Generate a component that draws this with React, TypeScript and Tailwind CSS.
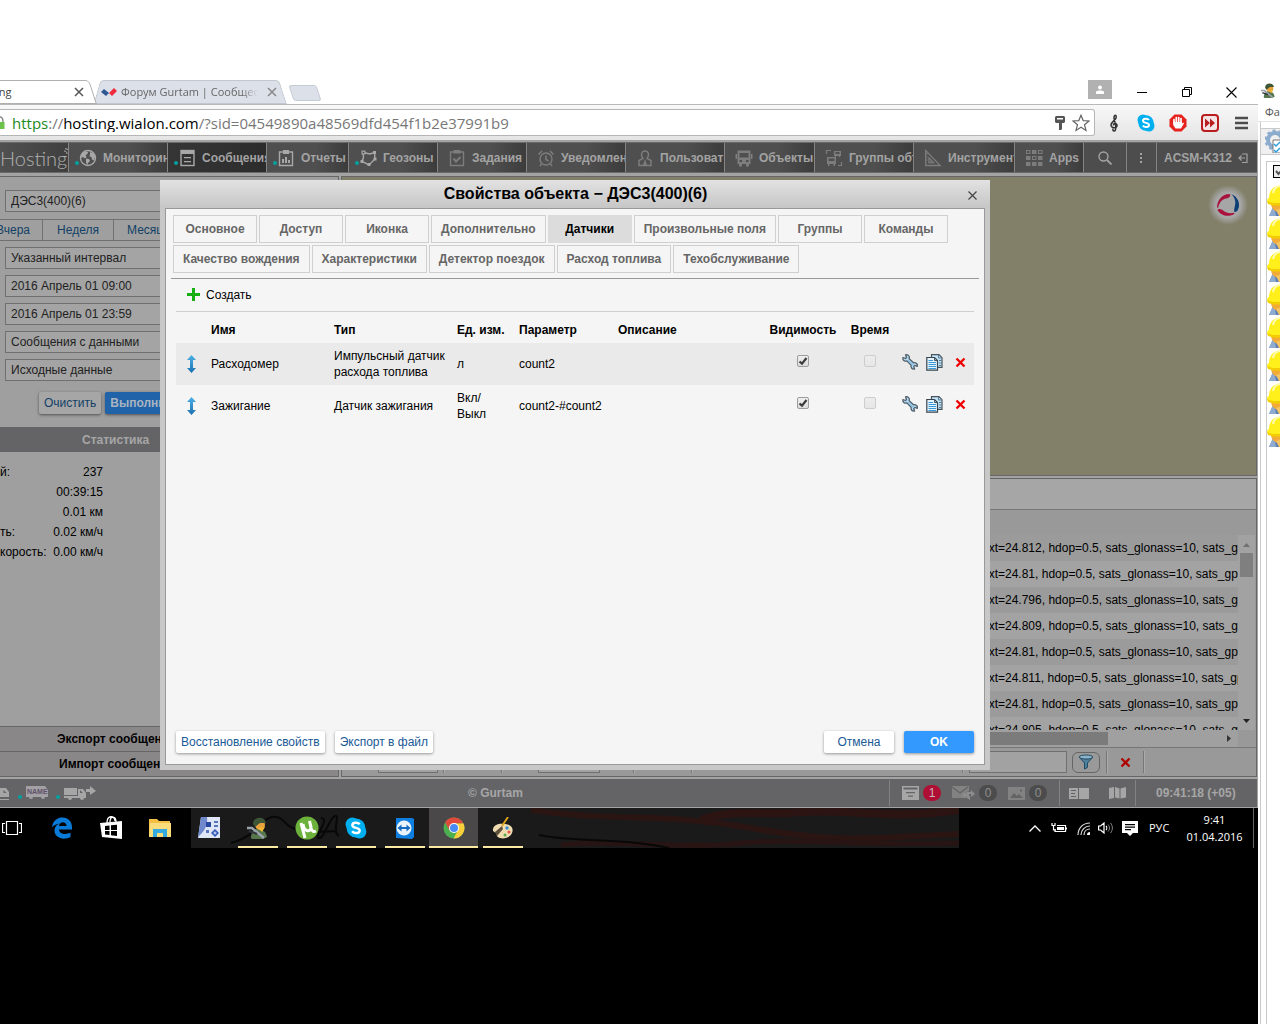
import React, { useState } from 'react';

interface NavItem {
  label: string;
  icon: React.ReactNode;
  width: string;
  dot?: boolean;
  dim?: boolean;
  active?: boolean;
}

interface Sensor {
  name: string;
  type: string;
  unit: string;
  param: string;
  visible: boolean;
}

interface TaskItem {
  name: string;
  icon: React.ReactNode;
  running?: boolean;
  active?: boolean;
}

const TABS = [
  'Основное', 'Доступ', 'Иконка', 'Дополнительно', 'Датчики', 'Произвольные поля', 'Группы', 'Команды',
  'Качество вождения', 'Характеристики', 'Детектор поездок', 'Расход топлива', 'Техобслуживание',
];

const SENSORS: Sensor[] = [
  { name: 'Расходомер', type: 'Импульсный датчик расхода топлива', unit: 'л', param: 'count2', visible: true },
  { name: 'Зажигание', type: 'Датчик зажигания', unit: 'Вкл/\nВыкл', param: 'count2-#count2', visible: true },
];

const VOLTAGES = ['24.812', '24.81', '24.796', '24.809', '24.81', '24.811', '24.81', '24.805'];

const STATS = [
  ['й:', '237'],
  ['', '00:39:15'],
  ['', '0.01 км'],
  ['ть:', '0.02 км/ч'],
  ['корость:', '0.00 км/ч'],
];

/* ---------- icons ---------- */

const Glyph: React.FC<{ children: React.ReactNode; className?: string; box?: string }> = ({ children, className = 'size-[18px]', box = '0 0 18 18' }) => (
  <svg viewBox={box} className={`shrink-0 ${className}`} fill="none" aria-hidden="true">{children}</svg>
);

const GlobeIcon = () => (
  <Glyph>
    <circle cx="9" cy="9" r="7.5" stroke="currentColor" strokeWidth="1.4" />
    <path d="M3 4.5 6 2.5l3 .5-.5 2-2 1 1 2-1.5 1.5L4 8 2 9zM7 9.5l3 .5 1 2-2 2-.5 2-1.5-2.500zM11 3l3.500 1.500 1.500 3-1 4-2-1-.5-2.500-2-.5.5-2z" fill="currentColor" />
  </Glyph>
);
const MessagesIcon = () => (
  <Glyph>
    <rect x="3" y="1.500" width="13" height="15" stroke="currentColor" strokeWidth="1.400" />
    <path d="M3 2h13v3H3zM6 8h7v1.300H6zM6 12h7v1.300H6z" fill="currentColor" />
  </Glyph>
);
const ReportsIcon = () => (
  <Glyph>
    <path d="M6 3H2.500v13.500h13V3H12" stroke="currentColor" strokeWidth="1.400" />
    <path d="M6 1h6v4H6zM5 10h2v4H5zM8 8h2v6H8zM11 11h2v3h-2z" fill="currentColor" />
  </Glyph>
);
const GeoIcon = () => (
  <Glyph>
    <path d="M4 3.500 11 5l4.500-1.500L16 10l-6 6-7-3.500 1.500-4z" stroke="currentColor" strokeWidth="1.400" />
    <path d="M2.500 1.500h4v4h-4zM14 2h3v3h-3zM14.500 8.500h3v3h-3zM8.500 14h3v3h-3zM1.500 11h3v3h-3z" fill="currentColor" />
    <rect x="3.700" y="2.700" width="1.600" height="1.600" fill="#4a4a4a" />
  </Glyph>
);
const TasksIcon = () => (
  <Glyph>
    <path d="M6 3H2.500v13.500h13V3H12" stroke="currentColor" strokeWidth="1.400" />
    <path d="M5.500 1h7v3.500h-7z" fill="currentColor" />
    <path d="m5.500 9.500 2.500 3 4.500-4.500" stroke="currentColor" strokeWidth="2" />
  </Glyph>
);
const AlarmIcon = () => (
  <Glyph>
    <circle cx="9" cy="10" r="6" stroke="currentColor" strokeWidth="1.400" />
    <path d="M9 6.500v4l2.500 1.500M4.500 15 3 17M13.500 15l1.500 2M1.500 5.500 5 2M16.500 5.500 13 2" stroke="currentColor" strokeWidth="1.500" />
  </Glyph>
);
const UserIcon = () => (
  <Glyph>
    <path d="M5.500 5.500a3.500 3.500 0 0 1 7 0c0 2-1 3-1.500 4l4 2v5H3v-5l4-2c-.5-1-1.500-2-1.500-4z" stroke="currentColor" strokeWidth="1.500" />
    <path d="m9 10 2 6H7z" fill="currentColor" />
  </Glyph>
);
const BusIcon = () => (
  <Glyph>
    <path fillRule="evenodd" d="M2.500 1.500h13V15H14v2.500h-3V15H7v2.500H4V15H2.500zM4.500 4v4.500h9V4zM4.500 11v2H7v-2zM11 11v2h2.500v-2zM.5 5H2v5H.5zM16 5h1.500v5H16z" fill="currentColor" />
  </Glyph>
);
const GroupsIcon = () => (
  <Glyph>
    <path fillRule="evenodd" d="M2 8h9v7h-1v2H8.500v-2h-4v2H3v-2H2zM3.500 9.500v2.500h6V9.500zM9 2h7v5h-1v1h-1V7h-3v1h-1V7H9zM10.500 3v2h4V3z" fill="currentColor" />
    <path d="M1.500 5V1.500H6M16.500 13v3.500H13" stroke="currentColor" strokeWidth="1.200" />
  </Glyph>
);
const ToolsIcon = () => (
  <Glyph>
    <path d="M1.700 1.500v15h14.500zM5 9v4.500h4.500z" stroke="currentColor" strokeWidth="1.300" />
    <path d="M2 5h1.500M2 8h1.500M2 11h1.500" stroke="currentColor" />
  </Glyph>
);
const AppsIcon = () => (
  <Glyph>
    {[1, 7, 13].map((y) => [1, 7, 13].map((x) => (
      <rect key={`${x}-${y}`} x={x + 0.5} y={y + 0.5} width="3.500" height="3" stroke="currentColor" fill={(x + y) % 4 === 0 || y === 13 ? 'currentColor' : 'none'} />
    )))}
  </Glyph>
);
const WrenchIcon = () => (
  <Glyph className="size-4" box="0 0 16 16">
    <path d="M3.500.8 4.500 3.500 3.500 4.500 1 3.500c-.6 2.500 1.500 4.200 4 3.500l4.200 4.200c-.7 2.500 1 4.300 3.400 3.800l-.9-2.400 1.200-1.200 2.400.9c.6-2.400-1.300-4.100-3.800-3.500L7.200 4.700C7.900 2.200 6 .3 3.500.8z" fill="#b4d9f0" stroke="#52626d" strokeWidth="1.300" strokeLinejoin="round" />
    <path d="m6 6 5.500 5.500" stroke="#8cc3e8" strokeWidth="1.500" />
  </Glyph>
);
const CopyIcon = () => (
  <Glyph className="size-[17px]" box="0 0 17 17">
    <path d="M5.500.7h7.500l3 3v9.600H5.500z" fill="#c3e4f7" stroke="#48545e" strokeWidth="1.200" />
    <path d="M12.500 1v3h3M13 6.500h2.500M13 9h2.500M13 11.500h2.500" stroke="#5a7d96" />
    <path d="M.8 3.500h7.700l3 3v9.700H.8z" fill="#e3f4fd" stroke="#37434c" strokeWidth="1.200" />
    <path d="M8.500 3.500v3h3" stroke="#48545e" />
    <path d="M2.500 6.500h4.500M2.500 8.500h7.500M2.500 10.500h7.500M2.500 12.500h7.500M2.500 14.500h7.500" stroke="#3b98d6" strokeWidth="1.200" />
  </Glyph>
);
const RedCross = ({ color = '#f00000' }) => (
  <Glyph className="size-[11px]" box="0 0 11 11">
    <path d="m1.500 1.500 8 8M9.500 1.500l-8 8" stroke={color} strokeWidth="2.300" />
  </Glyph>
);
const MoveIcon = () => (
  <Glyph className="h-[18px] w-[9px]" box="0 0 9 18">
    <defs>
      <linearGradient id="move" x1="0" y1="0" x2="0" y2="1">
        <stop offset="0" stopColor="#4fb0e6" />
        <stop offset="1" stopColor="#1970b0" />
      </linearGradient>
    </defs>
    <path d="M4.500 0 9 5H6v8h3l-4.500 5L0 13h3V5H0z" fill="url(#move)" />
  </Glyph>
);
const SkypeIcon = ({ className = 'size-[18px]' }) => (
  <svg viewBox="0 0 18 18" className={className} aria-hidden="true">
    <circle cx="6" cy="6" r="5.500" fill="#00aff0" />
    <circle cx="12" cy="12" r="5.500" fill="#00aff0" />
    <circle cx="9" cy="9" r="7.700" fill="#00aff0" />
    <path d="M12 6C10.500 4 6 4.200 6 6.700c0 2.800 6 1.600 6 4.300 0 2.600-4.600 2.600-6.200.6" stroke="#fff" strokeWidth="2" fill="none" />
  </svg>
);
const SoldierIcon = ({ className = 'size-[22px]' }) => (
  <svg viewBox="0 0 22 22" className={className} aria-hidden="true">
    <path d="M4 21c0-6 3-9 7-9 5 0 8 3 9 8l-4 2H5z" fill="#56764c" />
    <ellipse cx="13" cy="8" rx="5" ry="5" fill="#e8a23c" />
    <path d="M6 7c0-8 12-8 13-1L13 6 8 10z" fill="#3e5638" />
    <path d="m11 11 7-1-3 5z" fill="#f4b731" />
    <path d="M0 11h5l12 10" stroke="#9aa2ab" strokeWidth="2.500" fill="none" />
    <path d="m2 14 8 3" stroke="#30353a" strokeWidth="2" />
  </svg>
);
const WorkerIcon = () => (
  <svg viewBox="0 0 24 33" className="h-[33px] w-6 shrink-0" aria-hidden="true">
    <path d="m2 32 5-11h9l6 11z" fill="#5f7fb4" />
    <path d="M2 32 7 21l2 11z" fill="#8facd0" />
    <ellipse cx="13" cy="20" rx="9" ry="8" fill="#f2ab37" />
    <path d="m9 26 3 6h5V23z" fill="#f7c462" />
    <path d="M2 14C2-2 22-2 24 12l-1 7H2c-3-1-2-5 0-5z" fill="#fff01c" />
    <path d="M0 17c6 3 15 3 24 0v3c-9 2-18 2-23 0z" fill="#f3cf00" />
    <path d="M6 9c1-5 4-7 8-7" stroke="#fffbb0" strokeWidth="2" fill="none" />
  </svg>
);
const ChromeIcon = () => (
  <svg viewBox="0 0 22 22" className="size-[22px]" aria-hidden="true">
    <circle cx="11" cy="11" r="10.500" fill="#4caf50" />
    <path d="M11 11 2 5.500A10.500 10.500 0 0 1 20.500 6.500H11z" fill="#e0493c" />
    <path d="M11 6.500h9.500A10.500 10.500 0 0 1 10.500 21.500L15 13z" fill="#fbcf3c" />
    <path d="m2 5.500 5 8.500 4-3z" fill="#e0493c" />
    <circle cx="11" cy="11" r="5" fill="#fff" />
    <circle cx="11" cy="11" r="4" fill="#4a8af4" />
  </svg>
);

const NAV: NavItem[] = [
  { label: 'Мониторинг', icon: <GlobeIcon />, width: 'w-[99px]', dot: true },
  { label: 'Сообщения', icon: <MessagesIcon />, width: 'w-[99px]', dot: true, active: true },
  { label: 'Отчеты', icon: <ReportsIcon />, width: 'w-[82px]', dot: true },
  { label: 'Геозоны', icon: <GeoIcon />, width: 'w-[89px]', dot: true },
  { label: 'Задания', icon: <TasksIcon />, width: 'w-[89px]', dim: true },
  { label: 'Уведомления', icon: <AlarmIcon />, width: 'w-[99px]', dim: true },
  { label: 'Пользователи', icon: <UserIcon />, width: 'w-[99px]', dim: true },
  { label: 'Объекты', icon: <BusIcon />, width: 'w-[90px]', dim: true },
  { label: 'Группы объектов', icon: <GroupsIcon />, width: 'w-[99px]', dim: true },
  { label: 'Инструменты', icon: <ToolsIcon />, width: 'w-[101px]', dim: true },
  { label: 'Apps', icon: <AppsIcon />, width: 'w-[69px]', dim: true },
];

/* ---------- browser window ---------- */

const BrowserTabs = () => (
  <div className="flex h-[25px] shrink-0 items-stretch overflow-hidden border-b border-[#b9b9b9] bg-white font-['Open_Sans','Noto_Sans',sans-serif] text-[11px] text-[#444]">
    <div className="relative z-10 flex w-[93px] items-center justify-between pr-2 before:absolute before:inset-y-0 before:right-0 before:-left-4 before:skew-x-[18deg] before:rounded-tr before:border before:border-[#b0b0b0] before:bg-white">
      <span className="relative -ml-1">ing</span>
      <button aria-label="Закрыть вкладку" className="relative">
        <Glyph className="size-3" box="0 0 12 12"><path d="m2 2 8 8M10 2l-8 8" stroke="#555" strokeWidth="1.500" /></Glyph>
      </button>
    </div>
    <div className="relative flex w-[194px] items-center gap-1 pl-2 before:absolute before:inset-y-0 before:right-20 before:left-1 before:-skew-x-[16deg] before:rounded-tl before:border before:border-r-0 before:border-[#c3c8d0] before:bg-[#dce0e8] after:absolute after:inset-y-0 after:right-1 after:left-20 after:skew-x-[18deg] after:rounded-tr after:border after:border-l-0 after:border-[#c3c8d0] after:bg-[#dce0e8]">
      <svg viewBox="0 0 16 10" className="relative z-10 h-[10px] w-4" aria-hidden="true">
        <path d="m0 5 3-3 5 4-3 3z" fill="#2f5795" />
        <path d="m8 6 5-5 3 3-5 5z" fill="#f02b3d" />
      </svg>
      <span className="relative z-10 w-[137px] overflow-hidden whitespace-nowrap text-[#666] [mask-image:linear-gradient(to_right,black_88%,transparent)]">Форум Gurtam | Сообщество</span>
      <button aria-label="Закрыть вкладку" className="relative z-10 ml-1">
        <Glyph className="size-3" box="0 0 12 12"><path d="m2 2 8 8M10 2l-8 8" stroke="#888" strokeWidth="1.500" /></Glyph>
      </button>
    </div>
    <button aria-label="Новая вкладка" className="mt-[5px] ml-1 h-4 w-7 skew-x-[18deg] rounded-[3px] border border-[#c6ccd4] bg-[#dce0e8]" />
    <div className="ml-auto flex items-start pr-1">
      <button aria-label="Профиль" className="mr-[7px] flex h-[19px] w-6 items-center justify-center bg-[#b1b1b1]">
        <Glyph className="size-[10px]" box="0 0 10 10">
          <circle cx="5" cy="2.500" r="2" fill="#fff" />
          <path d="M1 9V7c0-2 8-2 8 0v2z" fill="#fff" />
        </Glyph>
      </button>
      <button aria-label="Свернуть" className="flex h-6 w-[45px] items-center justify-center">
        <Glyph className="size-[10px]" box="0 0 10 10"><path d="M0 5.500h10" stroke="#000" /></Glyph>
      </button>
      <button aria-label="Восстановить" className="flex h-6 w-[45px] items-center justify-center">
        <Glyph className="size-[10px]" box="0 0 10 10"><path d="M.5 2.500h7v7h-7zM2.500 2.500v-2h7v7h-2" stroke="#000" /></Glyph>
      </button>
      <button aria-label="Закрыть" className="flex h-6 w-[45px] items-center justify-center">
        <Glyph className="size-[11px]" box="0 0 11 11"><path d="m.5.5 10 10M10.500.5l-10 10" stroke="#000" strokeWidth="1.100" /></Glyph>
      </button>
    </div>
  </div>
);

const AddressBar = () => (
  <div className="flex h-[35px] shrink-0 items-center bg-gradient-to-b from-[#f8f8f8] to-[#e4e4e4] pr-[10px]">
    <div className="flex h-[27px] min-w-0 flex-1 items-center rounded-r-[3px] border border-l-0 border-[#b5b5b5] bg-white pr-1 font-['Open_Sans','Noto_Sans',sans-serif] text-[15px]">
      <Glyph className="mr-[7px] h-4 w-[5px]" box="0 0 5 16">
        <path d="M0 2c2 0 3 1 3 5" stroke="#8a8a8a" strokeWidth="1.500" />
        <path d="M0 7h4.500v7H0z" fill="#6cc24a" />
      </Glyph>
      <div className="flex-1 overflow-hidden whitespace-nowrap text-[#777]">
        <span className="text-[#1c8a1c]">https</span>://<span className="text-black">hosting.wialon.com</span>/?sid=04549890a48569dfd454f1b2e37991b9
      </div>
      <Glyph className="mr-[7px] h-[14px] w-[10px]" box="0 0 10 14">
        <path fillRule="evenodd" d="M1 0h8l1 1v5L9 7H7v6l-1 1H4V7H1L0 6V1zM2 2v1.500h6V2z" fill="#555" />
      </Glyph>
      <Glyph className="size-[18px]">
        <path d="m9 1.200 2.200 5.400 5.800.4-4.500 3.700 1.500 5.700L9 13.300l-5 3.100 1.500-5.700L1 7l5.800-.4z" stroke="#666" strokeWidth="1.200" />
      </Glyph>
    </div>
    <div className="ml-[10px] flex items-center gap-[14px]">
      <Glyph className="size-[18px]">
        <path d="M9.500 17c-2 0-2-2-1-2.300M9.500 17c3-1 .5-8-.5-13 0-4 3-3.500 2 0-.5 2-5 4-5 7 0 4 7 3.500 6 0-.8-2.500-4-1.500-3.500.5" stroke="#333" strokeWidth="1.500" />
      </Glyph>
      <SkypeIcon />
      <Glyph className="size-[18px]">
        <path d="M5.500.5h7l5 5v7l-5 5h-7l-5-5v-7z" fill="#e6221f" />
        <path d="M5 9V5.500M7.300 8.500v-5M9.700 8.500v-5M12 9V4.500" stroke="#fff" strokeWidth="1.700" strokeLinecap="round" />
        <path d="M4.200 8h8.600v2l1.200-1.500 1 .8-3 5.200H6.500L4.200 11z" fill="#fff" />
      </Glyph>
      <Glyph className="size-[18px]">
        <rect x="1" y="1" width="16" height="16" rx="3" fill="#f3e5e5" stroke="#b91d1f" strokeWidth="2" />
        <path d="m4 4.500 5 4.500-5 4.500zM9 4.500l5 4.500-5 4.500z" fill="#b91d1f" />
      </Glyph>
      <Glyph className="ml-0.5 h-[14px] w-[13px]" box="0 0 13 14">
        <path d="M0 2h13M0 7h13M0 12h13" stroke="#4d4d4d" strokeWidth="2.600" />
      </Glyph>
    </div>
  </div>
);

/* ---------- tracking app ---------- */

const TopNav = () => (
  <nav className="flex h-[31px] shrink-0 border-y border-[#6a6a6a] bg-[#4d4d4d] text-xs font-bold text-[#a3a3a3]">
    <div className="flex w-[68px] shrink-0 items-center bg-gradient-to-r from-[#515151] to-[#3f3f3f] font-['Lato',sans-serif] text-xl font-light text-[#b0b0b0]">
      <span>Hosting</span>
      <Glyph className="-ml-1 mb-3 size-2" box="0 0 8 8">
        <path d="M1 3c2 0 3 1 3 3M2 .700c3 0 5 2 5 5" stroke="currentColor" />
      </Glyph>
    </div>
    {NAV.map((item) => (
      <a
        key={item.label}
        href="#"
        className={`relative flex shrink-0 items-center gap-[6px] overflow-hidden border-l border-[#858585] bg-gradient-to-r pl-[10px] ${item.width} ${item.active ? 'from-[#353535] to-[#2c2c2c]' : 'from-[#4f4f4f] from-60% to-[#3c3c3c]'}`}
      >
        {item.dot && <span className="absolute bottom-[7px] left-[6px] size-1 rounded-full bg-[#00a0a0]" />}
        <span className={item.dim ? 'text-[#7d7d7d]' : 'text-[#a8a8a8]'}>{item.icon}</span>
        <span className="whitespace-nowrap">{item.label}</span>
      </a>
    ))}
    <button aria-label="Поиск" className="flex w-[43px] shrink-0 items-center justify-center border-l border-[#858585]">
      <Glyph className="size-[14px]" box="0 0 14 14">
        <circle cx="5.500" cy="5.500" r="4.500" stroke="currentColor" strokeWidth="1.400" />
        <path d="m9 9 4.500 4.500" stroke="currentColor" strokeWidth="1.800" />
      </Glyph>
    </button>
    <button aria-label="Меню" className="flex w-[30px] shrink-0 items-center justify-center border-l border-[#858585]">
      <Glyph className="h-[10px] w-[3px]" box="0 0 3 10"><path d="M0 0h2v2H0zM0 4h2v2H0zM0 8h2v2H0z" fill="currentColor" /></Glyph>
    </button>
    <a href="#" className="flex flex-1 items-center gap-[6px] border-l border-[#858585] pl-[7px] whitespace-nowrap">
      ACSM-K312
      <Glyph className="size-[10px]" box="0 0 10 10">
        <path d="M4 1h5v8.500H4M7 5H1M3.500 2.500 1 5l2.500 2.500" stroke="currentColor" strokeWidth="1.200" />
      </Glyph>
    </a>
  </nav>
);

const Field = ({ label, value }: { label: string; value: string }) => (
  <input aria-label={label} defaultValue={value} className="mr-1 ml-[5px] h-[22px] border border-[#707070] bg-[#a4a4a4] px-[5px] text-[#222]" />
);

const SidePanel = () => (
  <section className="flex w-[339px] shrink-0 flex-col overflow-hidden border-y border-r border-[#666] bg-[#9f9f9f] pt-[13px]">
    <div className="flex flex-col gap-[6px]">
      <Field label="Объект" value="ДЭС3(400)(6)" />
      <div className="mt-px flex h-[22px] border-y border-[#707070] text-[#123f66]">
        <button className="flex w-[42px] items-center justify-end pr-3">Вчера</button>
        <button className="w-[71px] border-l border-[#707070]">Неделя</button>
        <button className="w-[71px] border-l border-[#707070] pl-[13px] text-left">Месяц</button>
      </div>
      <Field label="Интервал" value="Указанный интервал" />
      <Field label="От" value="2016 Апрель 01 09:00" />
      <Field label="До" value="2016 Апрель 01 23:59" />
      <Field label="Тип сообщений" value="Сообщения с данными" />
      <Field label="Параметры" value="Исходные данные" />
    </div>
    <div className="mt-[11px] flex gap-1 pl-[39px]">
      <button className="h-[22px] rounded-xs bg-[#a6a6a6] px-[5px] text-[#123f66] shadow-[0_1px_3px_rgba(0,0,0,0.5)]">Очистить</button>
      <button className="h-[22px] rounded-xs bg-[#2163a8] px-[5px] font-bold text-[#a9b4c0] shadow-[0_1px_3px_rgba(0,0,0,0.5)]">Выполнить</button>
    </div>
    <h2 className="mt-[13px] h-[25px] bg-[#646466] pt-px pl-[82px] leading-[25px] font-bold text-[#a6a6a6]">Статистика</h2>
    <table className="mt-[10px] w-[103px] table-fixed leading-5 text-black">
      <tbody>
        {STATS.map(([label, value], i) => (
          <tr key={i}>
            <td className="w-[46px] whitespace-nowrap">{label}</td>
            <td className="w-[57px] text-right whitespace-nowrap">{value}</td>
          </tr>
        ))}
      </tbody>
    </table>
    <div className="mt-auto flex flex-col bg-[#8a8788] font-bold text-black">
      <button className="h-[25px] border-t border-[#666] pl-[57px] text-left">Экспорт сообщений</button>
      <button className="h-[25px] border-t border-[#666] pl-[59px] text-left">Импорт сообщений</button>
    </div>
  </section>
);

const MapView = () => (
  <section className="flex h-[300px] shrink-0 justify-end border border-[#666] bg-[#83806a]">
    <div className="mt-2 mr-2 flex size-10 items-center justify-center rounded-full [background:radial-gradient(circle,#a6a6a6_45%,rgba(166,166,166,0)_70%)]">
      <svg viewBox="0 0 24 24" className="size-6" aria-hidden="true">
        <path d="M13.500 1C6.500 1 1 7 1 14.500l1.200.3C3 9.500 6.500 6 10 5.500c2 0 4-1.500 4.300-3z" fill="#a9123c" />
        <path d="M15 1c1.500 1 4 4 4.300 8 .2 4-2 8-.8 10 1 .5 3-1 3.500-2.500C25 10 21 3 15 1z" fill="#0d3d75" />
        <path d="M1.500 17c.5-1.500 3-1.500 5 0 2.500 2.500 7 4 11.500 2.800l.5 1C13 24.500 4.500 23 1.500 17z" fill="#a9123c" />
      </svg>
    </div>
  </section>
);

const Separator = ({ className = '' }) => <span className={`h-[22px] w-0.5 shrink-0 border-l border-[#777] bg-[#aaa] ${className}`} />;

const MessagesPanel = () => (
  <section className="flex min-h-0 flex-1 flex-col border border-[#666] bg-[#999]">
    <div className="h-[31px] shrink-0 border-b border-[#777] bg-[#a6a6a6]" />
    <div className="h-[25px] shrink-0" />
    <div className="flex min-h-0 flex-1 pr-px">
      <div className="flex min-h-0 min-w-0 flex-1 flex-col">
        <div className="h-0 grow overflow-hidden text-black">
          {VOLTAGES.map((v, i) => (
            <div key={i} className={`h-[26px] overflow-hidden pl-[640px] leading-[26px] whitespace-nowrap ${i % 2 ? 'bg-[#a3a3a3]' : 'bg-[#9b9b9b]'}`}>
              ext={v}, hdop=0.5, sats_glonass=10, sats_gps=9
            </div>
          ))}
        </div>
        <div className="flex h-[17px] shrink-0 items-center bg-[#a0a0a0]">
          <div className="h-[13px] w-[766px] bg-[#7b7b7b]" />
          <Glyph className="mr-[7px] ml-auto h-[7px] w-1" box="0 0 4 7"><path d="m0 0 4 3.500L0 7z" fill="#333" /></Glyph>
        </div>
      </div>
      <div className="mb-[17px] flex w-[17px] shrink-0 flex-col items-center bg-[#a2a2a2] pt-2">
        <Glyph className="h-1 w-[7px]" box="0 0 7 4"><path d="m0 4 3.500-4L7 4z" fill="#707070" /></Glyph>
        <div className="mt-[6px] h-6 w-[13px] bg-[#7f7f7f]" />
        <Glyph className="mt-auto mb-[7px] h-1 w-[7px]" box="0 0 7 4"><path d="m0 0 3.500 4L7 0z" fill="#222" /></Glyph>
      </div>
    </div>
    <div className="flex h-[29px] shrink-0 items-center border-t border-[#777]">
      <input aria-label="Страница" className="ml-[36px] h-[22px] w-[60px] border border-[#707070] bg-[#a2a2a2]" />
      <Separator className="ml-[5px]" />
      <Separator className="ml-[56px]" />
      <input aria-label="Интервал" className="ml-[35px] h-[22px] w-[62px] border border-[#707070] bg-[#a2a2a2]" />
      <Separator className="ml-[33px]" />
      <Separator className="ml-[56px]" />
      <Separator className="ml-auto" />
      <input aria-label="Фильтр" className="ml-[5px] h-[22px] w-[98px] border border-[#707070] bg-[#a2a2a2]" />
      <button aria-label="Применить фильтр" className="ml-[5px] flex h-[21px] w-7 items-center justify-center rounded-[6px] border border-[#666]">
        <Glyph className="size-4" box="0 0 16 16">
          <path d="m1 3 5.500 6v6l3-1.500V9L15 3z" fill="#4d7f9e" stroke="#234b63" />
          <ellipse cx="8" cy="3" rx="6.800" ry="2" fill="#8db3c8" stroke="#234b63" />
        </Glyph>
      </button>
      <Separator className="ml-[6px]" />
      <button aria-label="Удалить" className="ml-3"><RedCross color="#b00000" /></button>
      <Separator className="mr-[111px] ml-3" />
    </div>
  </section>
);

const Counter = ({ value, alert = false }: { value: number; alert?: boolean }) => (
  <span className={`flex h-4 w-[18px] items-center justify-center rounded-full text-xs font-normal ${alert ? 'bg-[#b00f35] text-[#c8b8bc]' : 'bg-[#4c4c4c] text-[#8c8c8c]'}`}>{value}</span>
);

const StatusBar = () => (
  <footer className="flex h-7 shrink-0 items-center bg-[#646466] text-xs font-bold text-[#a6a6a6]">
    <div className="flex w-[468px] shrink-0 items-center">
      <Glyph className="h-4 w-[10px]" box="0 0 10 16">
        <path fillRule="evenodd" d="M2 3h4l3 4v5H0V3zM3.500 5v3h3zM0 14h9v1H0z" fill="currentColor" />
      </Glyph>
      <span className="mt-2 ml-2 size-1 rounded-full bg-[#00a0a0]" />
      <svg viewBox="0 0 22 14" className="ml-1 h-[14px] w-[22px]" aria-hidden="true">
        <path d="M0 0h19l3 4v7h-3a2 2 0 0 1-4 0H7a2 2 0 0 1-4 0H0z" fill="#a3a0a5" />
        <text x="1" y="8" fontSize="7" fontWeight="bold" fontFamily="Liberation Sans, sans-serif" fill="#5e5068">NAME</text>
      </svg>
      <span className="mt-2 ml-2 size-1 rounded-full bg-[#00a0a0]" />
      <svg viewBox="0 0 32 15" className="ml-1 h-[15px] w-8" aria-hidden="true">
        <path fillRule="evenodd" d="M0 2h13v7H0zM14 3h5l3 4v5h-2a2 2 0 0 1-4 0H8a2 2 0 0 1-4 0H0v-2h14zM16 4v3h3z" fill="#a6a6a6" />
        <path d="M22 3h4V0l6 5-6 4V6h-4z" fill="#a6a6a6" />
      </svg>
    </div>
    <a href="#" className="shrink-0">© Gurtam</a>
    <div className="flex h-7 flex-1 items-center justify-end">
      <div className="flex h-[26px] items-center border-l border-[#828282] pl-3">
        <Glyph className="mr-1 h-[14px] w-[17px]" box="0 0 17 14">
          <path fillRule="evenodd" d="M0 0h17v14H0zM1.500 1.500v2h14v-2zM4 6v1.200h9V6zM6 9.500v1.200h5V9.500z" fill="currentColor" />
        </Glyph>
        <Counter value={1} alert />
        <Glyph className="mr-1 ml-[11px] h-[14px] w-[23px] text-[#828282]" box="0 0 23 14">
          <path d="M0 0h17v5l-2 1v6H0z" fill="currentColor" />
          <path d="m0 1 8 6 8-6" stroke="#646466" strokeWidth="1.300" />
          <path d="m10 9 3-3v2h4v2h-4v2zM23 8l-4-4v2h-4v2h4v3zM18 10h-3v2l3 2z" fill="#8d8d8d" />
        </Glyph>
        <Counter value={0} />
        <Glyph className="mr-1 ml-[11px] h-[13px] w-[17px] text-[#828282]" box="0 0 17 13">
          <path fillRule="evenodd" d="M0 0h17v13H0zM2 11l4-5 3 3 2-2 4 4zM12 2.500h2v2h-2z" fill="currentColor" />
        </Glyph>
        <Counter value={0} />
      </div>
      <div className="ml-3 flex h-[26px] items-center gap-5 border-l border-[#828282] pr-[9px] pl-[9px]">
        <Glyph className="h-[11px] w-5" box="0 0 20 11">
          <path fillRule="evenodd" d="M0 0h9v11H0zM2 2v1h5V2zM2 5v1h4V5zM2 8v1h5V8zM10 0h10v11H10z" fill="currentColor" />
        </Glyph>
        <Glyph className="h-3 w-[17px]" box="0 0 17 12">
          <path d="m0 1 5-1v11l-5 1zM6 0l4.500 1.500v10L6 10.500zM11.500 1.500 17 0v10.500l-5.500 1z" fill="currentColor" />
        </Glyph>
      </div>
      <div className="flex h-[26px] w-[122px] items-center border-l border-[#828282] pl-5 whitespace-nowrap">09:41:18 (+05)</div>
    </div>
  </footer>
);

/* ---------- unit properties dialog ---------- */

const SensorCheck = ({ label, defaultChecked = false, disabled = false }: { label: string; defaultChecked?: boolean; disabled?: boolean }) => (
  <span className="relative inline-block size-3 align-top">
    <input
      type="checkbox"
      aria-label={label}
      defaultChecked={defaultChecked}
      disabled={disabled}
      className="peer block size-3 appearance-none rounded-[2px] border border-[#9c9c9c] bg-gradient-to-b from-[#efefef] to-[#dcdcdc] disabled:border-[#cdcdcd] disabled:from-[#ededed] disabled:to-[#e6e6e6]"
    />
    <svg viewBox="0 0 12 12" className="pointer-events-none absolute inset-0 hidden size-3 peer-checked:block" fill="none" aria-hidden="true">
      <path d="M2.500 6.500 5 8.700 9.500 3" stroke="#3c3c3c" strokeWidth="2.200" />
    </svg>
  </span>
);

const SensorTable = () => (
  <table className="w-full table-fixed text-left leading-4">
    <colgroup>
      <col className="w-[35px]" />
      <col className="w-[123px]" />
      <col className="w-[123px]" />
      <col className="w-[62px]" />
      <col className="w-[99px]" />
      <col />
      <col className="w-[80px]" />
      <col className="w-[54px]" />
      <col className="w-[77px]" />
    </colgroup>
    <thead>
      <tr className="h-[31px]">
        <th aria-label="Порядок" />
        <th className="pt-1">Имя</th>
        <th className="pt-1">Тип</th>
        <th className="pt-1">Ед. изм.</th>
        <th className="pt-1">Параметр</th>
        <th className="pt-1">Описание</th>
        <th className="pt-1 text-center">Видимость</th>
        <th className="pt-1 text-center">Время</th>
        <th aria-label="Действия" />
      </tr>
    </thead>
    <tbody>
      {SENSORS.map((s, i) => (
        <tr key={s.name} className={`h-[42px] ${i % 2 === 0 ? 'bg-[#eaeaea]' : ''}`}>
          <td className="pl-[11px]"><MoveIcon /></td>
          <td>{s.name}</td>
          <td className="pr-2">{s.type}</td>
          <td className="whitespace-pre-line">{s.unit}</td>
          <td>{s.param}</td>
          <td />
          <td className="pb-[6px] text-center leading-none"><SensorCheck label={`${s.name}: видимость`} defaultChecked={s.visible} /></td>
          <td className="pb-[6px] text-center leading-none"><SensorCheck label={`${s.name}: время`} disabled /></td>
          <td className="pb-1">
            <div className="flex items-center gap-2 pl-[5px]">
              <button aria-label="Свойства"><WrenchIcon /></button>
              <button aria-label="Копировать"><CopyIcon /></button>
              <button aria-label="Удалить" className="ml-1"><RedCross /></button>
            </div>
          </td>
        </tr>
      ))}
    </tbody>
  </table>
);

const BUTTON = 'h-[22px] rounded-xs shadow-[0_1px_3px_rgba(0,0,0,0.4)]';

const PropertiesDialog = () => {
  const [tab, setTab] = useState('Датчики');

  return (
    <div role="dialog" aria-labelledby="dialog-title" className="absolute top-[180px] right-[290px] bottom-[254px] left-40 z-20 flex flex-col bg-[#c8c8c8] px-[5px] pb-[5px] text-xs text-black">
      <header className="-mx-[5px] flex h-7 shrink-0 items-center bg-gradient-to-b from-[#e2e2e2] to-[#c6c6c6] pr-3 pl-6">
        <h1 id="dialog-title" className="flex-1 text-center text-base leading-6 font-bold">Свойства объекта − ДЭС3(400)(6)</h1>
        <button aria-label="Закрыть" className="mt-[3px]">
          <Glyph className="size-[11px]" box="0 0 11 11"><path d="m1.500 1.500 8 8M9.500 1.500l-8 8" stroke="#444" strokeWidth="1.200" /></Glyph>
        </button>
      </header>
      <div className="flex min-h-0 flex-1 flex-col border border-[#999] bg-[#f5f5f5] px-[5px] pt-[6px]">
        <div role="tablist" className="flex flex-wrap gap-0.5 border-b border-[#999] px-0.5 pb-[5px]">
          {TABS.map((name) => (
            <button
              key={name}
              role="tab"
              aria-selected={tab === name}
              onClick={() => setTab(name)}
              className={`h-7 min-w-21 border px-[9px] font-bold whitespace-nowrap ${tab === name ? 'border-[#dcdcdc] bg-[#dcdcdc] text-black' : 'border-[#cfcfcf] text-[#666]'}`}
            >
              {name}
            </button>
          ))}
        </div>
        <div className="flex min-h-0 flex-1 flex-col px-[5px]">
          <div className="flex h-[33px] shrink-0 items-center border-b border-[#cfcfcf] pl-[11px]">
            <button className="flex items-center gap-[6px]">
              <Glyph className="mb-px size-[13px]" box="0 0 13 13"><path d="M5 0h3v5h5v3H8v5H5V8H0V5h5z" fill="#16b016" /></Glyph>
              <span className="leading-4">Создать</span>
            </button>
          </div>
          <SensorTable />
        </div>
        <div className="flex items-center gap-[10px] px-[5px] pb-[11px]">
          <button className={`${BUTTON} bg-white px-[5px] text-[#1a5a96]`}>Восстановление свойств</button>
          <button className={`${BUTTON} bg-white px-[5px] text-[#1a5a96]`}>Экспорт в файл</button>
          <button className={`${BUTTON} ml-auto w-[70px] bg-white text-[#1a5a96]`}>Отмена</button>
          <button className={`${BUTTON} w-[70px] bg-[#3399ff] font-bold text-white`}>OK</button>
        </div>
      </div>
    </div>
  );
};

/* ---------- taskbar ---------- */

const TASKS: TaskItem[] = [
  {
    name: 'Microsoft Edge',
    icon: (
      <Glyph className="size-[22px]" box="0 0 22 22">
        <path d="M1 10C2 3 7 .5 11.500.5 17.500.5 21 5 21 10v2.500H8c.5 5 7 5.500 11.500 3V20C12 24 3 20.500 3.500 13c.3-3.500 2.500-5.500 5-6.500C6 7 3 8 1 10zm7-1h7.500c0-5-7-5-7.500 0z" fill="#0a7ad8" />
      </Glyph>
    ),
  },
  {
    name: 'Store',
    icon: (
      <Glyph className="size-6" box="0 0 24 24">
        <path d="M8 7c0-8 7-8 8-2M11 6c0-7 6-6 6 0" stroke="#fff" strokeWidth="1.300" />
        <path d="m1 7 22-2v18L3 21z" fill="#fff" />
        <path d="m6 10 4.500-.5V14H6zM12 9.300 18 8.700V14h-6zM6 15h4.500v4L6 18.600zM12 15h6v5l-6-.7z" fill="#000" />
      </Glyph>
    ),
  },
  {
    name: 'Проводник',
    icon: (
      <Glyph className="size-[22px]" box="0 0 22 22">
        <path d="M0 2h8l2 2h11v16H0z" fill="#f3bf42" />
        <path d="M1 6h21v14H0z" fill="#fbdc7c" />
        <path d="M4 20v-8h14v8h-4v-4H8v4z" fill="#33a9e0" />
      </Glyph>
    ),
  },
  {
    name: 'Конфигуратор',
    icon: (
      <Glyph className="size-[22px]" box="0 0 22 22">
        <path d="M3 0h19v21H0z" fill="#dfe6f5" />
        <path d="M3 0h6c1 7-2 14-8 19L0 21z" fill="#6f89cc" />
        <path d="M8 5h5v5H8z" fill="#2949a0" />
        <path d="M8 13h3v3H8zM16 4h4v2h-4zM16 8h4v2h-4z" fill="#5a74bc" />
        <path d="m17 12 4 4-4 4-4-4z" fill="#3157b8" />
        <path d="M17 14.500v3M15.500 16h3" stroke="#dfe6f5" />
      </Glyph>
    ),
  },
  { name: 'Диспетчер', icon: <SoldierIcon />, running: true },
  {
    name: 'uTorrent',
    icon: (
      <Glyph className="size-6" box="0 0 24 24">
        <circle cx="12" cy="12" r="11.500" fill="#6cb13b" />
        <path d="m6 7 4 15M8 8c1 8 8 9 8 3L14.500 5 16 12c1 4 3 4 5 3" stroke="#fff" strokeWidth="3" />
      </Glyph>
    ),
    running: true,
  },
  { name: 'Skype', icon: <SkypeIcon className="size-[22px]" />, running: true },
  {
    name: 'TeamViewer',
    icon: (
      <Glyph className="size-[22px]" box="0 0 22 22">
        <path d="M2 1h16l2 1v18l-2 2-16-1z" fill="#0e7fe0" />
        <circle cx="10" cy="11" r="7.500" fill="#e9f3fc" />
        <path d="m3.500 11 4-3.500V10h5V7.500l4 3.500-4 3.500V12h-5v2.500z" fill="#1468c0" />
      </Glyph>
    ),
    running: true,
  },
  { name: 'Google Chrome', icon: <ChromeIcon />, running: true, active: true },
  {
    name: 'Paint',
    icon: (
      <Glyph className="size-[22px]" box="0 0 22 22">
        <path d="M1 14C0 8 7 6 13 7c6 .5 9 4 7 9s-10 7-14 4c-2-1-.5-3-2-4z" fill="#efdcb0" />
        <circle cx="15" cy="11" r="1.700" fill="#3f8fd8" />
        <circle cx="17" cy="15" r="1.500" fill="#e05545" />
        <circle cx="13" cy="18" r="1.500" fill="#55ad4a" />
        <path d="M16 0 10 9" stroke="#e2a91c" strokeWidth="1.800" />
        <path d="m10 9-7 6 2 4 6-7z" fill="#5e503c" />
      </Glyph>
    ),
    running: true,
  },
];

const Taskbar = () => (
  <div className="flex h-10 shrink-0 bg-black font-['Open_Sans','Noto_Sans',sans-serif] text-[11px] text-white">
    <div className="relative flex w-[959px] shrink-0">
      <svg viewBox="0 0 768 40" className="absolute top-0 right-0 h-10 w-[768px]" fill="none" aria-hidden="true">
        <rect width="768" height="40" fill="#1b1a1b" />
        <path d="M340 2c80 12 130 2 220 18s120 10 208 6" stroke="#2a1513" strokeWidth="6" />
        <path d="M510 12c30-12 60-4 100-8 50-3 90 8 158-2" stroke="#2b1412" strokeWidth="8" />
        <path d="M370 37c50-6 120 4 170-1 60-7 120 2 228-1" stroke="#281412" strokeWidth="5" />
        <path d="M348 27c40 8 80 2 130 13M40 35c30-8 30-28 45-26s0 18 60 14M130 10c10 0-8 20-2 20s10-20 16-22-4 16 4 20" stroke="#080808" strokeWidth="2" />
      </svg>
      <button aria-label="Представление задач" className="relative flex w-[37px] shrink-0 items-center pl-0.5">
        <Glyph className="h-[14px] w-5" box="0 0 20 14">
          <path d="M4.500.5h11v13h-11zM3 2.500H.5v9H3M17 2.500h2.500v9H17" stroke="#fff" strokeWidth="1.200" />
        </Glyph>
      </button>
      {TASKS.map((t) => (
        <button key={t.name} aria-label={t.name} className={`relative flex w-[49px] shrink-0 items-center justify-center ${t.active ? 'bg-[#4b4849]' : ''}`}>
          {t.icon}
          {t.running && <span className={`absolute bottom-0 h-0.5 bg-[#fbeaa3] ${t.active ? 'w-full' : 'w-10'}`} />}
        </button>
      ))}
    </div>
    <div className="ml-auto flex items-center pr-1">
      <Glyph className="mr-[10px] h-[7px] w-3" box="0 0 12 7"><path d="m.5 6.500 5.500-5.500 5.500 5.500" stroke="#fff" strokeWidth="1.300" /></Glyph>
      <Glyph className="mr-[10px] h-[10px] w-4" box="0 0 16 10">
        <path d="M6 2.500h8.500v6H4V6M1 0v2.500h3V0M2.500 3v4H5M15.500 4.500v2" stroke="#fff" strokeWidth="1.200" />
        <path d="M6 4h7v3H6z" fill="#fff" />
      </Glyph>
      <Glyph className="mr-2 size-[13px]" box="0 0 13 13">
        <path d="M1 13C1 6 6 1 13 1M4 13c0-5 4-9 9-9M7 13c0-3.500 2.500-6 6-6" stroke="#ddd" strokeWidth="1.200" />
        <path d="M10 13c0-2 1-3 3-3v3z" fill="#fff" />
      </Glyph>
      <Glyph className="mr-[9px] h-3 w-[15px]" box="0 0 15 12">
        <path d="M.6 4h2L6 1v10L2.600 8h-2zM8 4c1 1 1 3 0 4" stroke="#fff" strokeWidth="1.200" />
        <path d="M10 2.500c2 2 2 5 0 7M12.500 1c2.500 3 2.500 7 0 10" stroke="#888" />
      </Glyph>
      <Glyph className="mr-[11px] h-[15px] w-4" box="0 0 16 15">
        <path fillRule="evenodd" d="M0 0h16v12h-5l-3 3-3-3H0zM3 3v1.200h10V3zM3 5.500v1.200h10V5.500zM3 8v1.200h6V8z" fill="#fff" />
      </Glyph>
      <span className="w-[27px]">РУС</span>
      <div className="w-[77px] text-center leading-[17px]">
        <div>9:41</div>
        <div>01.04.2016</div>
      </div>
      <span className="h-10 w-px bg-[#666]" />
    </div>
  </div>
);

/* ---------- neighbour window at the right edge ---------- */

const NeighbourWindow = () => (
  <aside className="flex w-[22px] shrink-0 flex-col overflow-hidden bg-white pt-20">
    <div className="h-6 shrink-0 pt-[3px] pl-[3px]"><SoldierIcon className="size-[15px]" /></div>
    <div className="h-[18px] shrink-0 overflow-hidden border-b border-[#e3e3e3] pl-[7px] font-['Open_Sans','Noto_Sans',sans-serif] text-[11px] leading-4 text-[#555]">Файл</div>
    <div className="ml-0.5 flex flex-1 flex-col border-l border-[#c9c9c9] pt-[6px]">
      <div className="h-[27px] w-[60px] shrink-0 border-y border-[#c9c9c9] bg-[#f0f0f0] pl-1">
        <Glyph className="size-6" box="0 0 24 24">
          <circle cx="10" cy="11" r="7" stroke="#8cacce" strokeWidth="4" />
          <circle cx="10" cy="11" r="9.500" stroke="#8cacce" strokeWidth="2" strokeDasharray="3 3" />
          <path d="M8 11h14v13H8z" fill="#fff" stroke="#777" />
          <path d="m9 15 2 2 4-4M9 21l2 2 4-4" stroke="#2fa0dc" strokeWidth="1.500" />
        </Glyph>
      </div>
      <div className="mt-[6px] ml-[5px] flex flex-1 flex-col border-t border-l border-[#c9c9c9] pt-[3px]">
        <span className="relative ml-[6px] size-[13px] shrink-0">
          <input type="checkbox" defaultChecked aria-label="Все объекты" className="peer block size-[13px] appearance-none border border-black bg-[#eee]" />
          <svg viewBox="0 0 13 13" className="pointer-events-none absolute inset-0 hidden size-[13px] peer-checked:block" fill="none" aria-hidden="true">
            <path d="m3 6 2.500 3L10 4" stroke="#555" strokeWidth="2" />
          </svg>
        </span>
        <div className="mt-[6px] flex flex-col">
          {[1, 2, 3, 4, 5, 6, 7, 8].map((n) => <WorkerIcon key={n} />)}
        </div>
      </div>
    </div>
  </aside>
);

const App: React.FC = () => (
  <div className="relative flex min-h-screen overflow-hidden bg-white font-['Liberation_Sans',Arial,sans-serif] text-xs">
    <div className="flex min-w-0 flex-1 flex-col pt-20">
      <BrowserTabs />
      <AddressBar />
      <div className="flex min-h-0 flex-1 flex-col border-t-2 border-r border-b border-[#a3a3a3] bg-[#a3a3a3]">
        <TopNav />
        <main className="mt-[3px] mb-0.5 flex min-h-0 flex-1 gap-0.5">
          <SidePanel />
          <div className="flex min-w-0 flex-1 flex-col gap-0.5">
            <MapView />
            <MessagesPanel />
          </div>
        </main>
        <StatusBar />
      </div>
      <Taskbar />
      <div className="h-44 shrink-0 bg-black" />
    </div>
    <NeighbourWindow />
    <PropertiesDialog />
  </div>
);

export default App;
